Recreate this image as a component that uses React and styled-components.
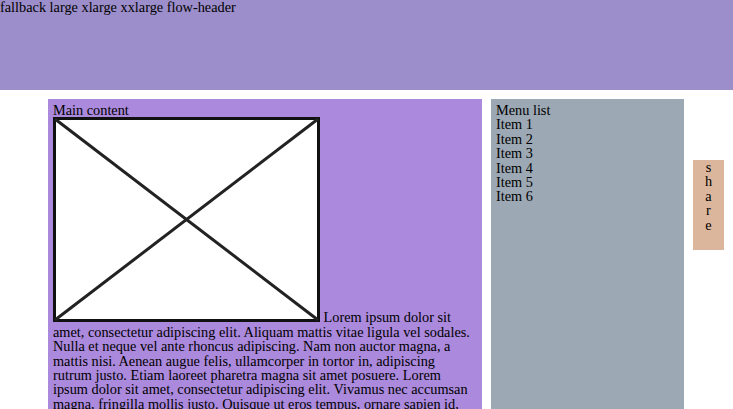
import React from "react";
import styled, { createGlobalStyle } from "styled-components";

const Global = createGlobalStyle`
  html, body { margin: 0; padding: 0; background: #fff; }
  body {
    font-family: "Liberation Serif", "Times New Roman", serif;
    font-size: 14.3px;
    line-height: 14.4px;
    color: #000;
    overflow: hidden;
  }
`;

const Page = styled.div`
  width: 733px;
  height: 409px;
  overflow: hidden;
`;

const Header = styled.header`
  height: 90px;
  background: #9c8eca;
`;

const Row = styled.div`
  display: flex;
  align-items: flex-start;
  gap: 9px;
  padding: 9px 9px 0 48px;
`;

const Main = styled.main`
  width: 434px;
  box-sizing: border-box;
  padding: 4px 5px 20px 5px;
  background: #ab89dc;
  min-height: 400px;
`;

const Menu = styled.nav`
  width: 193px;
  box-sizing: border-box;
  padding: 4px 5px;
  background: #9ca8b4;
  min-height: 400px;
`;

const Item = styled.div``;

const Share = styled.aside`
  width: 31px;
  height: 90px;
  margin-top: 61px;
  background: #dbb69c;
  text-align: center;
`;

const Letter = styled.span`
  display: block;
`;

const Picture = styled.svg`
  display: inline;
  vertical-align: baseline;
`;

const lorem =
  "Lorem ipsum dolor sit amet, consectetur adipiscing elit. Aliquam mattis vitae ligula vel sodales. Nulla et neque vel ante rhoncus adipiscing. Nam non auctor magna, a mattis nisi. Aenean augue felis, ullamcorper in tortor in, adipiscing rutrum justo. Etiam laoreet pharetra magna sit amet posuere. Lorem ipsum dolor sit amet, consectetur adipiscing elit. Vivamus nec accumsan magna, fringilla mollis justo. Quisque ut eros tempus, ornare sapien id, dapibus metus. Morbi eleifend ligula et nisl tempus, a commodo velit pulvinar.";

export default function App() {
  return (
    <Page>
      <Global />
      <Header>fallback large xlarge xxlarge flow-header</Header>
      <Row>
        <Main>
          <div>Main content</div>
          <Picture width="267" height="205" viewBox="0 0 267 205">
            <rect x="1.5" y="1.5" width="264" height="202" fill="#fff" stroke="#111" strokeWidth="3" />
            <line x1="2" y1="2" x2="265" y2="203" stroke="#222" strokeWidth="3" />
            <line x1="265" y1="2" x2="2" y2="203" stroke="#222" strokeWidth="3" />
          </Picture>{" "}
          {lorem}
        </Main>
        <Menu>
          <Item>Menu list</Item>
          {[1, 2, 3, 4, 5, 6].map((n) => (
            <Item key={n}>Item {n}</Item>
          ))}
        </Menu>
        <Share>
          {"share".split("").map((c, i) => (
            <Letter key={i}>{c}</Letter>
          ))}
        </Share>
      </Row>
    </Page>
  );
}
